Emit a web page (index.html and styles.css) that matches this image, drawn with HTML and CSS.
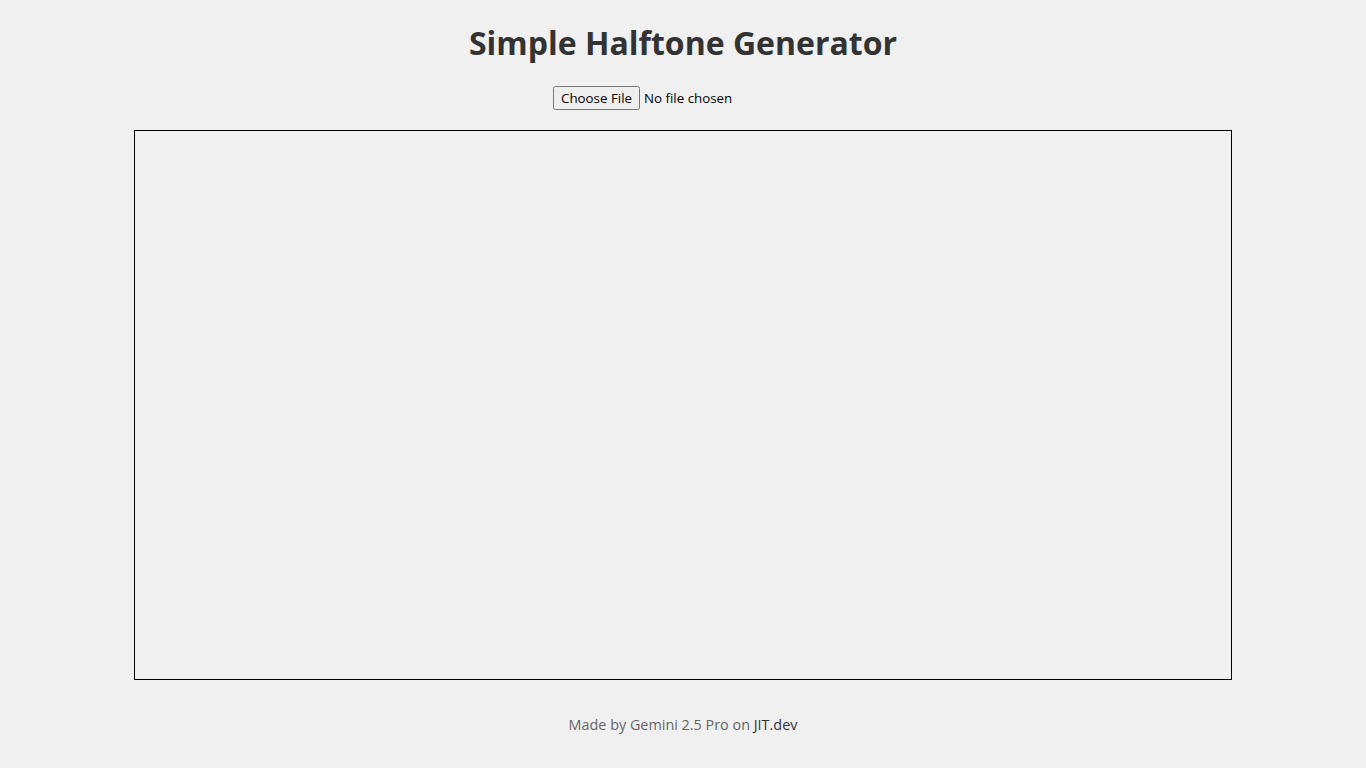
FILE: index.html
```html
<!DOCTYPE html>
<html lang="en">
<head>
    <meta charset="UTF-8">
    <meta name="viewport" content="width=device-width, initial-scale=1.0">
    <title>Simple Halftone Generator</title>
    <link rel="stylesheet" href="styles.css">
</head>
<body>
    <h1>Simple Halftone Generator</h1>
    <div class="controls">
        <input type="file" id="imageInput" accept="image/*">
    </div>
    <canvas id="halftoneCanvas" width="1096" height="548"></canvas>
    <footer class="credit">Made by Gemini 2.5 Pro on <a href="#">JIT.dev</a></footer>
</body>
</html>
```

FILE: styles.css
```css
body {
    font-family: "Open Sans", sans-serif;
    background-color: #f0f0f0;
    color: #333;
    display: flex;
    flex-direction: column;
    align-items: center;
    margin: 0;
    padding: 20px;
}
h1 {
    font-size: 32px;
    font-weight: 700;
    margin: 0 0 20px 0;
    line-height: 46px;
}
.controls {
    margin-bottom: 20px;
}
input[type="file"] {
    font-family: inherit;
    font-size: 13.33px;
    color: #000;
}
input[type="file"]::file-selector-button {
    font: inherit;
}
canvas {
    border: 1px solid #000;
    display: block;
}
.credit {
    margin-top: 35px;
    font-size: 14.4px;
    color: #666;
}
.credit a {
    color: #333;
    text-decoration: none;
}
```
